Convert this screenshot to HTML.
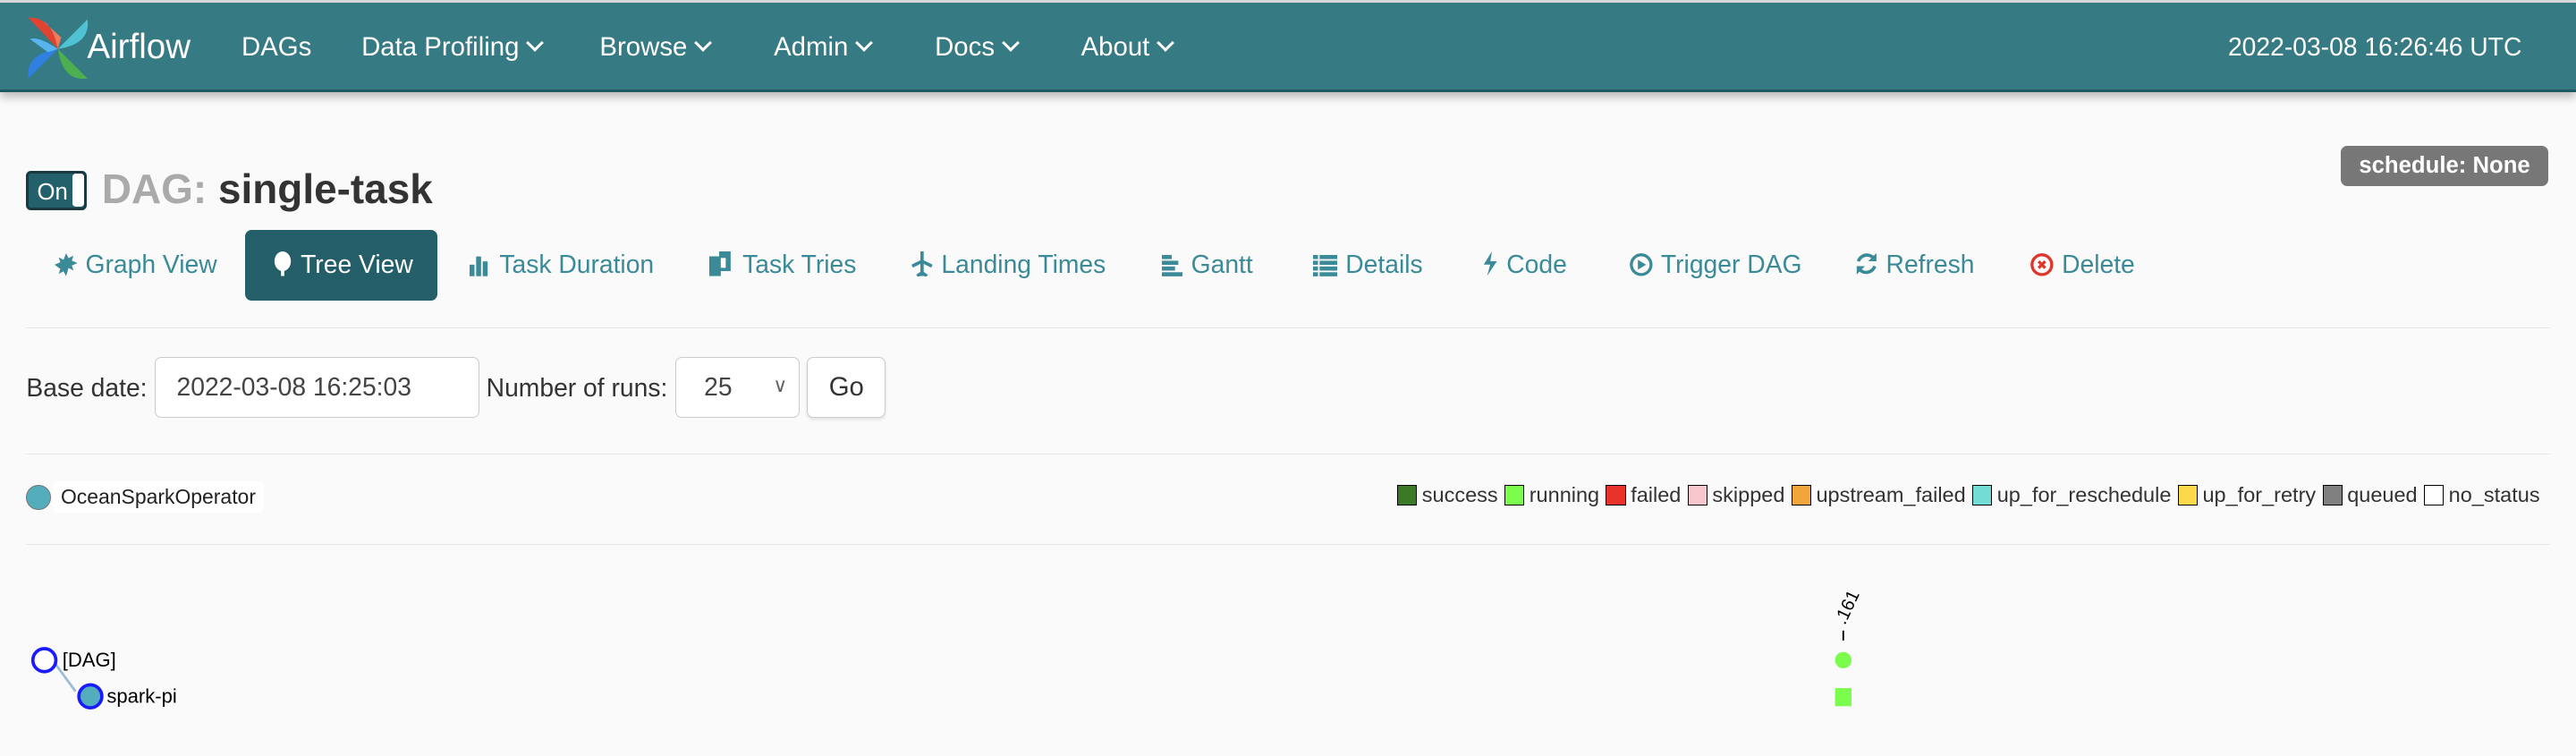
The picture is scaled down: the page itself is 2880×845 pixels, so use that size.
<!DOCTYPE html>
<html><head><meta charset="utf-8"><style>
html,body{margin:0;padding:0;}
body{width:1568px;height:460px;zoom:1.83673;background:#fafafa;font-family:"Liberation Sans",sans-serif;position:relative;overflow:hidden;color:#333;}
.a{position:absolute;white-space:nowrap;}
.nav{position:absolute;left:0;top:0;width:1568px;height:56px;background:#367a83;border-top:2px solid #d8d8d8;border-bottom:2px solid #1d5a62;box-shadow:0 3px 5px rgba(0,0,0,.25);box-sizing:border-box;}
.ni{position:absolute;top:18px;color:#fff;font-size:16px;}
.car{display:inline-block;width:6px;height:6px;border-right:2px solid #fff;border-bottom:2px solid #fff;transform:rotate(45deg);margin-left:6px;position:relative;top:-4px;}
.tab{position:absolute;top:152px;font-size:15.4px;color:#3a8a98;}
.tab svg{vertical-align:-2px;margin-right:5px;}
hr{position:absolute;left:16px;width:1536px;border:0;border-top:1px solid #e8e8e8;margin:0;}
.box{position:absolute;background:#fff;border:1px solid #ccc;border-radius:4px;box-sizing:border-box;}
.lg{display:inline-block;width:11px;height:11px;border:1px solid #000;vertical-align:-2px;margin:0 3px 0 4px;}
</style></head><body>
<div class="nav">
<svg class="a" style="left:15px;top:8px" width="40" height="40" viewBox="0 0 40 40">
<path d="M20 20 L2 1 Q16 0 20 20Z" fill="#e0432f"/><path d="M20 20 Q17 6 11 3 L22 13Z" fill="#f07a5a"/>
<path d="M20 20 L38 2 Q40 17 20 20Z" fill="#4fc3d4"/>
<path d="M20 20 L38 38 Q23 40 20 20Z" fill="#4caf50"/>
<path d="M20 20 L2 38 Q0 23 20 20Z" fill="#2f80e0"/><path d="M20 20 Q8 12 3 14 L14 22Z" fill="#58b4f0"/>
</svg>
<div class="a" style="left:53px;top:15px;color:#fff;font-size:21px;">Airflow</div>
<div class="ni" style="left:147px">DAGs</div>
<div class="ni" style="left:220px">Data Profiling<span class="car"></span></div>
<div class="ni" style="left:365px">Browse<span class="car"></span></div>
<div class="ni" style="left:471px">Admin<span class="car"></span></div>
<div class="ni" style="left:569px">Docs<span class="car"></span></div>
<div class="ni" style="left:658px">About<span class="car"></span></div>
<div class="ni" style="right:33px;font-size:15.4px">2022-03-08 16:26:46 UTC</div>
</div>
<div class="a" style="left:16px;top:104px;width:37px;height:24px;background:#23606b;border:2px solid #1a3a40;border-radius:3px;box-sizing:border-box;"><span style="position:absolute;left:5px;top:4px;color:#fff;font-size:14px">On</span><span style="position:absolute;right:0;top:0;width:7px;height:20px;background:#fff;border-radius:2px"></span></div>
<div class="a" style="left:62px;top:100px;font-size:25px;font-weight:bold"><span style="color:#aaa">DAG:</span> <span style="color:#333">single-task</span></div>
<div class="a" style="left:1425px;top:89px;width:126px;height:24px;background:#777;border-radius:4px;color:#fff;font-weight:bold;font-size:14px;text-align:center;line-height:24px">schedule: None</div>
<div class="a" style="left:149px;top:140px;width:117px;height:43px;background:#245e68;border-radius:4px"></div>
<div class="tab" style="left:33px"><svg width="14" height="14" viewBox="0 0 14 14"><path d="M7 0l1.5 3 3-1.5-1 3 3.5 1.5-3.5 1.5 1 3-3-1.5L7 14 5.5 11l-3 1.5 1-3L0 7l3.5-1.5-1-3 3 1.5z" fill="#3a8a98"/></svg>Graph View</div>
<div class="tab" style="left:166px;color:#fff"><svg width="12" height="15" viewBox="0 0 12 15"><ellipse cx="6" cy="6" rx="5" ry="6" fill="#fff"/><rect x="5" y="9" width="2" height="6" fill="#fff"/></svg>Tree View</div>
<div class="tab" style="left:286px"><svg width="13" height="14" viewBox="0 0 13 14"><rect x="0" y="7" width="3" height="7" fill="#3a8a98"/><rect x="4" y="2" width="3" height="12" fill="#3a8a98"/><rect x="8" y="5" width="3" height="9" fill="#3a8a98"/></svg>Task Duration</div>
<div class="tab" style="left:432px"><svg width="15" height="15" viewBox="0 0 15 15"><rect x="0" y="3" width="7" height="12" fill="#3a8a98"/><rect x="6" y="0" width="7" height="12" fill="#3a8a98"/><rect x="7" y="4" width="3" height="6" fill="#fff"/></svg>Task Tries</div>
<div class="tab" style="left:554px"><svg width="14" height="15" viewBox="0 0 14 15"><path d="M7 0v15M1 9l6-3 6 3M4 15l3-2 3 2" stroke="#3a8a98" stroke-width="2" fill="none"/></svg>Landing Times</div>
<div class="tab" style="left:707px"><svg width="13" height="13" viewBox="0 0 13 13"><rect x="0" y="0" width="6" height="2.5" fill="#3a8a98"/><rect x="0" y="3.5" width="10" height="2.5" fill="#3a8a98"/><rect x="0" y="7" width="8" height="2.5" fill="#3a8a98"/><rect x="0" y="10.5" width="13" height="2.5" fill="#3a8a98"/></svg>Gantt</div>
<div class="tab" style="left:799px"><svg width="15" height="13" viewBox="0 0 15 13"><g fill="#3a8a98"><rect x="0" y="0" width="3" height="2.5"/><rect x="4" y="0" width="11" height="2.5"/><rect x="0" y="3.5" width="3" height="2.5"/><rect x="4" y="3.5" width="11" height="2.5"/><rect x="0" y="7" width="3" height="2.5"/><rect x="4" y="7" width="11" height="2.5"/><rect x="0" y="10.5" width="3" height="2.5"/><rect x="4" y="10.5" width="11" height="2.5"/></g></svg>Details</div>
<div class="tab" style="left:902px"><svg width="10" height="15" viewBox="0 0 10 15"><path d="M6 0L1 8h4l-2 7 6-9H5z" fill="#3a8a98"/></svg>Code</div>
<div class="tab" style="left:992px"><svg width="14" height="14" viewBox="0 0 14 14"><circle cx="7" cy="7" r="6" stroke="#3a8a98" stroke-width="1.8" fill="none"/><path d="M5 4l5 3-5 3z" fill="#3a8a98"/></svg>Trigger DAG</div>
<div class="tab" style="left:1129px"><svg width="14" height="15" viewBox="0 0 14 15"><path d="M12 5A5.5 5.5 0 0 0 2 6M2 10a5.5 5.5 0 0 0 10-1" stroke="#3a8a98" stroke-width="2" fill="none"/><path d="M13 1v5H8zM1 14V9h5z" fill="#3a8a98"/></svg>Refresh</div>
<div class="tab" style="left:1236px"><svg width="14" height="14" viewBox="0 0 14 14"><circle cx="7" cy="7" r="6" stroke="#e0352b" stroke-width="1.8" fill="none"/><path d="M5 5l4 4M9 5l-4 4" stroke="#e0352b" stroke-width="1.8"/></svg>Delete</div>
<hr style="top:199px">
<div class="a" style="left:16px;top:227px;font-size:15.4px">Base date:</div>
<div class="box" style="left:94px;top:217px;width:198px;height:37px"><span class="a" style="left:13px;top:9px;font-size:15.4px;color:#444">2022-03-08 16:25:03</span></div>
<div class="a" style="left:296px;top:227px;font-size:15.4px">Number of runs:</div>
<div class="box" style="left:411px;top:217px;width:76px;height:37px"><span class="a" style="left:17px;top:9px;font-size:15.4px;color:#444">25</span><span class="a" style="left:59px;top:10px;font-size:12px;color:#666">&#8744;</span></div>
<div class="box" style="left:491px;top:217px;width:48px;height:37px;box-shadow:0 1px 2px rgba(0,0,0,.1)"><span class="a" style="left:13px;top:9px;font-size:16px;color:#333">Go</span></div>
<hr style="top:276px">
<div class="a" style="left:16px;top:295px;width:14px;height:14px;border-radius:50%;background:#53adbd;border:1px solid #777"></div>
<div class="a" style="left:32px;top:293px;padding:2px 5px;background:#fff;border-radius:3px;font-size:12.5px;color:#222">OceanSparkOperator</div>
<div class="a" style="right:22px;top:294px;font-size:12.8px;color:#333"><span class="lg" style="background:#3a7a26"></span>success<span class="lg" style="background:#7cfc4c"></span>running<span class="lg" style="background:#e8332a"></span>failed<span class="lg" style="background:#f7c6cd"></span>skipped<span class="lg" style="background:#f1a53a"></span>upstream_failed<span class="lg" style="background:#72ddd4"></span>up_for_reschedule<span class="lg" style="background:#fcd94a"></span>up_for_retry<span class="lg" style="background:#808080"></span>queued<span class="lg" style="background:#fff"></span>no_status</div>
<hr style="top:331px">
<svg class="a" style="left:0;top:340px" width="1568" height="120">
<line x1="32" y1="62" x2="46" y2="81" stroke="#9bbbd8" stroke-width="1.5"/>
<circle cx="27" cy="62" r="7" fill="#fff" stroke="#1a1aff" stroke-width="2"/>
<circle cx="55" cy="84" r="7" fill="#53adbd" stroke="#1a1aff" stroke-width="2"/>
<text x="38" y="66" font-size="12" font-family="Liberation Sans" fill="#000">[DAG]</text>
<text x="65" y="88" font-size="12" font-family="Liberation Sans" fill="#000">spark-pi</text>
<line x1="1122" y1="44" x2="1122" y2="50" stroke="#000"/>
<text x="0" y="0" font-size="11" font-family="Liberation Sans" fill="#000" transform="translate(1123,41) rotate(-65)">.161</text>
<circle cx="1122" cy="62" r="5" fill="#7cfc4c"/>
<rect x="1117" y="79" width="10" height="11" fill="#7cfc4c"/>
</svg>
</body></html>
